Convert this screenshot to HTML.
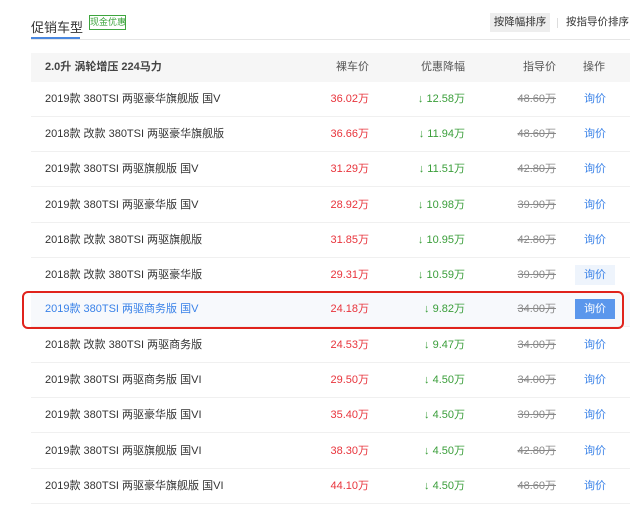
<!DOCTYPE html><html><head><meta charset="utf-8"><style>
*{margin:0;padding:0;box-sizing:border-box}
body{width:635px;height:508px;background:#fff;font-family:"Liberation Sans","Noto Sans CJK SC",sans-serif;font-size:11px;color:#333;position:relative;overflow:hidden}
.a{position:absolute;white-space:nowrap}
.row{position:absolute;left:31px;width:599px;height:35px;border-bottom:1px solid #f0f0f0}
.row span{position:absolute;top:0;line-height:34px}
.n{left:14px}.p{right:261px;color:#e8343c}.d{right:165px;color:#3a9e3a}.g{right:74px;color:#888;text-decoration:line-through}.o{left:544px;width:40px;text-align:center;color:#3a82e8}
</style></head><body>
<div class="a" style="left:31px;top:17px;font-size:13px;color:#333">促销车型</div>
<div class="a" style="left:89px;top:15px;width:37px;height:15px;border:1px solid #3ea53e;color:#3ea53e;font-size:9px;line-height:13px;text-align:center">现金优惠</div>
<div class="a" style="left:31px;top:37px;width:49px;height:2px;background:#4a88e0"></div>
<div class="a" style="left:31px;top:39px;width:599px;height:1px;background:#e6e6e6"></div>
<div class="a" style="left:490px;top:13px;width:60px;height:19px;background:#eee;line-height:19px;text-align:center;font-size:10.5px">按降幅排序</div>
<div class="a" style="left:557px;top:18px;width:1px;height:10px;background:#ddd"></div>
<div class="a" style="left:566px;top:13px;line-height:19px;font-size:10.5px">按指导价排序</div>
<div class="a" style="left:31px;top:53px;width:599px;height:29px;background:#f6f6f6"></div>
<div class="a" style="left:45px;top:53px;line-height:29px;font-weight:bold;color:#444">2.0升 涡轮增压 224马力</div>
<div class="a" style="right:266px;top:53px;line-height:29px;color:#555">裸车价</div>
<div class="a" style="right:170px;top:53px;line-height:29px;color:#555">优惠降幅</div>
<div class="a" style="right:79px;top:53px;line-height:29px;color:#555">指导价</div>
<div class="a" style="left:583px;top:53px;line-height:29px;color:#555">操作</div>

<div class="row" style="top:82px"><span class="n">2019款 380TSI 两驱豪华旗舰版 国V</span><span class="p">36.02万</span><span class="d">↓ 12.58万</span><span class="g">48.60万</span><span class="o">询价</span></div>
<div class="row" style="top:117px"><span class="n">2018款 改款 380TSI 两驱豪华旗舰版</span><span class="p">36.66万</span><span class="d">↓ 11.94万</span><span class="g">48.60万</span><span class="o">询价</span></div>
<div class="row" style="top:152.4px"><span class="n">2019款 380TSI 两驱旗舰版 国V</span><span class="p">31.29万</span><span class="d">↓ 11.51万</span><span class="g">42.80万</span><span class="o">询价</span></div>
<div class="row" style="top:187.6px"><span class="n">2019款 380TSI 两驱豪华版 国V</span><span class="p">28.92万</span><span class="d">↓ 10.98万</span><span class="g">39.90万</span><span class="o">询价</span></div>
<div class="row" style="top:222.8px"><span class="n">2018款 改款 380TSI 两驱旗舰版</span><span class="p">31.85万</span><span class="d">↓ 10.95万</span><span class="g">42.80万</span><span class="o">询价</span></div>
<div class="row" style="top:258px"><span class="n">2018款 改款 380TSI 两驱豪华版</span><span class="p">29.31万</span><span class="d">↓ 10.59万</span><span class="g">39.90万</span><span class="o" style="top:7px;line-height:20px;background:#eef4fc">询价</span></div>
<div class="row" style="top:292px;background:#f7f9fc"><span class="n" style="color:#3a82e8">2019款 380TSI 两驱商务版 国V</span><span class="p">24.18万</span><span class="d">↓ 9.82万</span><span class="g">34.00万</span><span class="o" style="top:7px;line-height:20px;background:#5b97ec;color:#fff">询价</span></div>
<div class="a" style="left:22px;top:291px;width:602px;height:38px;border:2.5px solid #e0231c;border-radius:6px"></div>
<div class="row" style="top:328px"><span class="n">2018款 改款 380TSI 两驱商务版</span><span class="p">24.53万</span><span class="d">↓ 9.47万</span><span class="g">34.00万</span><span class="o">询价</span></div>
<div class="row" style="top:363.2px"><span class="n">2019款 380TSI 两驱商务版 国VI</span><span class="p">29.50万</span><span class="d">↓ 4.50万</span><span class="g">34.00万</span><span class="o">询价</span></div>
<div class="row" style="top:398.4px"><span class="n">2019款 380TSI 两驱豪华版 国VI</span><span class="p">35.40万</span><span class="d">↓ 4.50万</span><span class="g">39.90万</span><span class="o">询价</span></div>
<div class="row" style="top:433.6px"><span class="n">2019款 380TSI 两驱旗舰版 国VI</span><span class="p">38.30万</span><span class="d">↓ 4.50万</span><span class="g">42.80万</span><span class="o">询价</span></div>
<div class="row" style="top:468.8px"><span class="n">2019款 380TSI 两驱豪华旗舰版 国VI</span><span class="p">44.10万</span><span class="d">↓ 4.50万</span><span class="g">48.60万</span><span class="o">询价</span></div>
</body></html>
